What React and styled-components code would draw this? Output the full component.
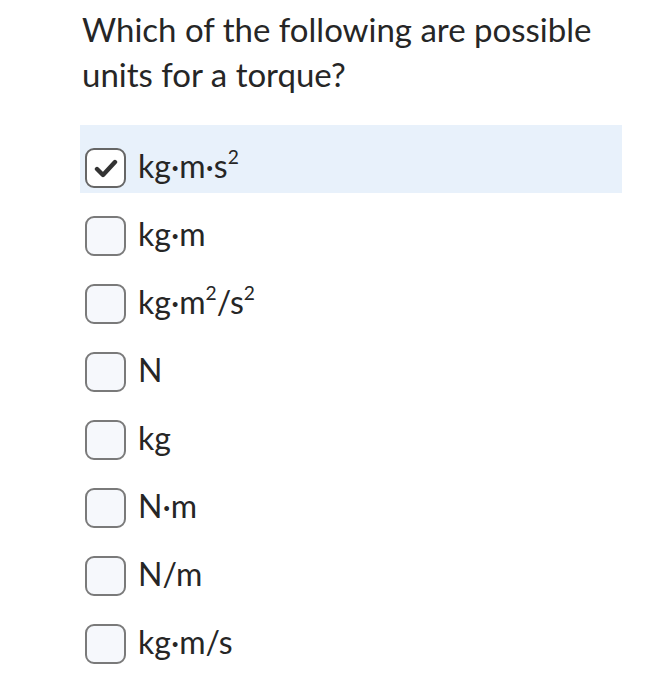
import React from "react";
import styled, { createGlobalStyle } from "styled-components";

const Global = createGlobalStyle`
  html, body { margin: 0; padding: 0; background: #ffffff; }
  body { font-family: Lato, "Noto Sans", sans-serif; color: #262626; }
`;

const Page = styled.div`
  width: 665px;
  height: 700px;
  box-sizing: border-box;
  padding: 7px 43px 0 80px;
  display: flex;
  flex-direction: column;
`;

const Question = styled.h1`
  margin: 0 0 28px 2px;
  font-weight: 400;
  font-size: 33px;
  line-height: 45px;
  color: #262626;
`;

const List = styled.div`
  display: flex;
  flex-direction: column;
`;

const Row = styled.label`
  display: flex;
  align-items: flex-start;
  gap: 12px;
  height: 68px;
  box-sizing: border-box;
  padding: 23px 0 0 5px;
  background: ${(p) => (p.$selected ? "#e8f1fb" : "transparent")};
`;

const Box = styled.span`
  width: 41px;
  height: 40px;
  box-sizing: border-box;
  border: 2px solid ${(p) => (p.$checked ? "#666666" : "#7a7a7a")};
  border-radius: 9px;
  background: ${(p) => (p.$checked ? "#ffffff" : "#f6f8fc")};
  display: flex;
  align-items: center;
  justify-content: center;
  flex: none;
`;

const Label = styled.span`
  font-size: 32px;
  line-height: 36px;
  color: #262626;
`;

const Sup = styled.sup`
  font-size: 0.6em;
  vertical-align: 0.75em;
  line-height: 0;
`;

const Check = () => (
  <svg width="24" height="20" viewBox="0 0 24 20">
    <path d="M3 11 L9 17 L21 4" fill="none" stroke="#333" strokeWidth="4.4" strokeLinecap="round" strokeLinejoin="round" />
  </svg>
);

const options = [
  { k: 1, label: <>kg·m·s<Sup>2</Sup></>, checked: true },
  { k: 2, label: <>kg·m</> },
  { k: 3, label: <>kg·m<Sup>2</Sup>/s<Sup>2</Sup></> },
  { k: 4, label: <>N</> },
  { k: 5, label: <>kg</> },
  { k: 6, label: <>N·m</> },
  { k: 7, label: <>N/m</> },
  { k: 8, label: <>kg·m/s</> },
];

export default function App() {
  return (
    <>
      <Global />
      <Page>
        <Question>
          Which of the following are possible
          <br />
          units for a torque?
        </Question>
        <List>
          {options.map((o) => (
            <Row key={o.k} $selected={o.checked}>
              <Box $checked={o.checked}>{o.checked && <Check />}</Box>
              <Label>{o.label}</Label>
            </Row>
          ))}
        </List>
      </Page>
    </>
  );
}
